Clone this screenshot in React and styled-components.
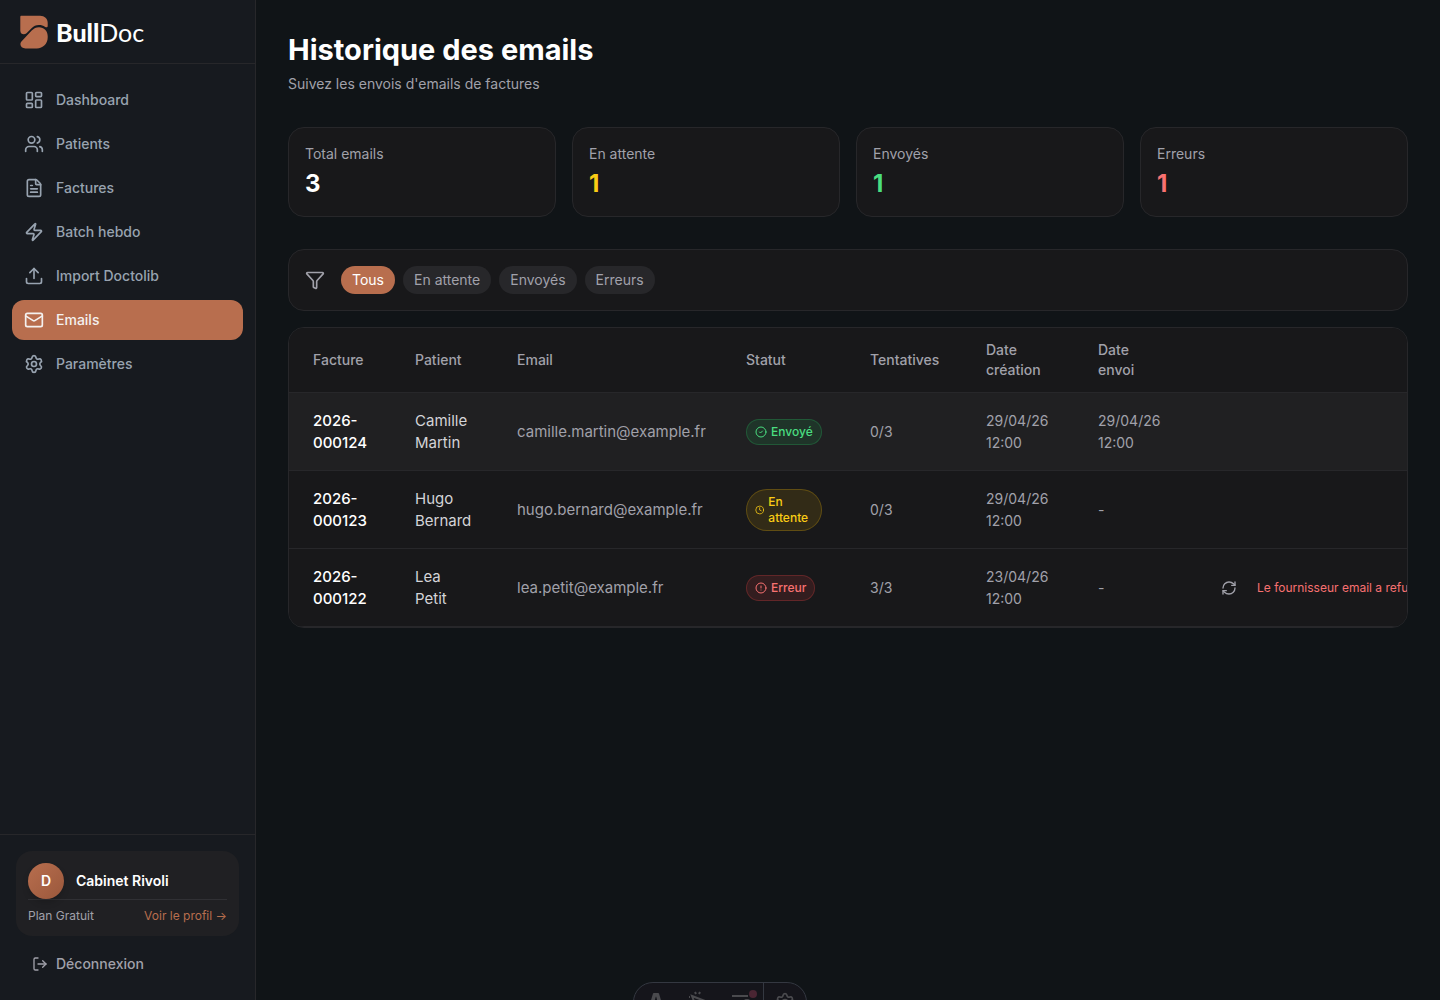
import React from "react";
import styled, { createGlobalStyle, css } from "styled-components";
import {
  LayoutDashboard, Users, FileText, Zap, Upload, Mail, Settings, LogOut,
  Filter, CircleCheck, Clock, CircleAlert, RefreshCw,
} from "lucide-react";

const color = {
  page: "#101417",
  sidebar: "#171a1f",
  card: "#18181a",
  raised: "#202023",
  line: "#27272a",
  accent: "#b86e4e",
  muted: "#a1a1aa",
  nav: "#98a3b0",
};

const GlobalStyle = createGlobalStyle`
  *, *::before, *::after { box-sizing: border-box; }
  body {
    margin: 0;
    background: ${color.page};
    color: #fafafa;
    font-family: Inter, "Liberation Sans", sans-serif;
    font-size: 15px;
    line-height: 22px;
    -webkit-font-smoothing: antialiased;
  }
  h1, p, ul { margin: 0; padding: 0; }
  ul { list-style: none; }
  button { font: inherit; border: 0; cursor: pointer; }
  a { text-decoration: none; }
`;

const Shell = styled.div`
  display: flex;
  min-height: 100vh;
`;

const Sidebar = styled.aside`
  position: sticky;
  top: 0;
  display: flex;
  flex-direction: column;
  flex: 0 0 256px;
  height: 100vh;
  background: ${color.sidebar};
  border-right: 1px solid ${color.line};
`;

const Brand = styled.a`
  display: flex;
  align-items: center;
  gap: 8px;
  height: 64px;
  padding: 0 20px;
  border-bottom: 1px solid ${color.line};
  color: #fff;
  font-family: Lato, "Liberation Sans", sans-serif;
  font-size: 25px;
  line-height: 30px;
  strong { font-weight: 900; }
`;

const Nav = styled.nav`
  flex: 1;
  padding: 16px 12px;
`;

const NavList = styled.ul`
  display: grid;
  gap: 4px;
`;

const NavLink = styled.a`
  display: flex;
  align-items: center;
  gap: 12px;
  height: 40px;
  padding: 0 12px;
  border-radius: 12px;
  font-size: 14px;
  line-height: 20px;
  font-weight: 500;
  color: ${({ $active }) => ($active ? "#f4f1ef" : color.nav)};
  background: ${({ $active }) => ($active ? color.accent : "transparent")};
`;

const SidebarFooter = styled.div`
  display: grid;
  gap: 8px;
  padding: 16px;
  border-top: 1px solid ${color.line};
`;

const ProfileCard = styled.section`
  padding: 12px;
  border-radius: 16px;
  background: ${color.raised};
`;

const ProfileRow = styled.div`
  display: flex;
  align-items: center;
  gap: 12px;
  font-size: 14px;
  line-height: 20px;
  font-weight: 600;
  color: #fff;
`;

const Avatar = styled.span`
  display: grid;
  place-items: center;
  width: 36px;
  height: 36px;
  border-radius: 50%;
  background: linear-gradient(135deg, #b86e4e, #9a583c);
  box-shadow: 0 4px 6px rgba(0, 0, 0, 0.15);
`;

const PlanRow = styled.div`
  display: flex;
  justify-content: space-between;
  padding-top: 8px;
  border-top: 1px solid #303034;
  font-size: 12px;
  line-height: 16px;
  color: ${color.muted};
  a { color: ${color.accent}; }
`;

const LogoutButton = styled.button`
  display: flex;
  align-items: center;
  gap: 8px;
  height: 40px;
  padding: 0 16px;
  background: transparent;
  color: ${color.muted};
  font-size: 14px;
  line-height: 20px;
  font-weight: 500;
`;

const Main = styled.main`
  flex: 1;
  min-width: 0;
  padding: 32px;
`;

const PageHeader = styled.header`
  display: grid;
  gap: 4px;
  margin-bottom: 32px;
  h1 {
    font-size: 29px;
    line-height: 36px;
    font-weight: 700;
    color: #fff;
  }
  p {
    font-size: 14px;
    line-height: 23px;
    color: ${color.muted};
  }
`;

const panel = css`
  background: ${color.card};
  border: 1px solid ${color.line};
  border-radius: 16px;
`;

const Stats = styled.section`
  display: grid;
  grid-template-columns: repeat(4, 1fr);
  gap: 16px;
  margin-bottom: 32px;
`;

const StatCard = styled.div`
  ${panel}
  display: grid;
  gap: 4px;
  padding: 16px;
`;

const StatLabel = styled.p`
  font-size: 14px;
  line-height: 20px;
  color: ${color.muted};
`;

const StatValue = styled.p`
  font-size: 24px;
  line-height: 32px;
  font-weight: 700;
  color: ${({ $color }) => $color};
`;

const FilterBar = styled.section`
  ${panel}
  display: flex;
  align-items: center;
  gap: 16px;
  padding: 16px;
  margin-bottom: 16px;
  color: ${color.muted};
`;

const Chips = styled.div`
  display: flex;
  gap: 8px;
`;

const Chip = styled.button`
  padding: 4px 11px;
  border-radius: 14px;
  font-size: 14px;
  line-height: 20px;
  color: ${({ $active }) => ($active ? "#fff" : color.muted)};
  background: ${({ $active }) => ($active ? color.accent : color.line)};
`;

const TablePanel = styled.section`
  ${panel}
  overflow-x: auto;
  scrollbar-width: none;
`;

const Table = styled.table`
  width: 100%;
  min-width: 1192px;
  table-layout: fixed;
  border-collapse: separate;
  border-spacing: 0;
`;

const Column = styled.col`
  width: ${({ $width }) => $width}px;
`;

const HeadCell = styled.th`
  padding: 12px 24px;
  border-bottom: 1px solid ${color.line};
  font-size: 14px;
  line-height: 20px;
  font-weight: 500;
  text-align: left;
  color: ${color.muted};
`;

const Row = styled.tr`
  background: ${({ $highlighted }) => ($highlighted ? "#202022" : "transparent")};
`;

const Cell = styled.td`
  height: 78px;
  padding: 16px 24px;
  border-bottom: 1px solid ${color.line};
  font-size: ${({ $numeric }) => ($numeric ? 14 : 15)}px;
  font-weight: ${({ $strong }) => ($strong ? 500 : 400)};
  color: ${({ $tone }) => $tone || color.muted};
`;

const badgeTones = {
  sent: ["#4ade80", "34, 197, 94"],
  pending: ["#facc15", "234, 179, 8"],
  error: ["#f87171", "239, 68, 68"],
};

const Badge = styled.span`
  display: flex;
  align-items: center;
  gap: 4px;
  width: fit-content;
  padding: 4px 8px;
  border: 1px solid rgba(${({ $kind }) => badgeTones[$kind][1]}, 0.25);
  border-radius: 21px;
  background: rgba(${({ $kind }) => badgeTones[$kind][1]}, 0.13);
  color: ${({ $kind }) => badgeTones[$kind][0]};
  font-size: 12px;
  line-height: 16px;
  font-weight: 500;
`;

const Actions = styled.div`
  display: flex;
  align-items: center;
  gap: 8px;
`;

const RetryButton = styled.button`
  display: grid;
  place-items: center;
  flex: none;
  width: 40px;
  height: 32px;
  padding: 0;
  background: transparent;
  color: ${color.muted};
`;

const ErrorText = styled.span`
  max-width: 200px;
  overflow: hidden;
  text-overflow: ellipsis;
  white-space: nowrap;
  font-size: 12px;
  line-height: 16px;
  color: #f87171;
`;

const DevBar = styled.div`
  position: fixed;
  left: 50%;
  bottom: -22px;
  display: flex;
  height: 40px;
  transform: translateX(-50%);
  overflow: hidden;
  border: 1px solid #343841;
  border-radius: 20px;
  background: #15151b;
  color: #4a4a4e;
`;

const DevButton = styled.button`
  display: grid;
  place-items: center;
  width: 43px;
  padding: 0;
  border-left: ${({ $divided }) => ($divided ? "1px solid #343841" : "0")};
  background: transparent;
  color: inherit;
  svg { overflow: visible; }
`;

const navItems = [
  [LayoutDashboard, "Dashboard"],
  [Users, "Patients"],
  [FileText, "Factures"],
  [Zap, "Batch hebdo"],
  [Upload, "Import Doctolib"],
  [Mail, "Emails"],
  [Settings, "Paramètres"],
];

const stats = [
  ["Total emails", 3, "#ffffff"],
  ["En attente", 1, "#facc15"],
  ["Envoyés", 1, "#4ade80"],
  ["Erreurs", 1, "#f87171"],
];

const filters = ["Tous", "En attente", "Envoyés", "Erreurs"];

const columns = [
  ["Facture", 102],
  ["Patient", 102],
  ["Email", 229],
  ["Statut", 124],
  ["Tentatives", 116],
  ["Date création", 112],
  ["Date envoi", 111],
  ["", 296],
];

const statuses = {
  sent: [CircleCheck, "Envoyé"],
  pending: [Clock, "En attente"],
  error: [CircleAlert, "Erreur"],
};

const emails = [
  { invoice: "2026-000124", patient: "Camille Martin", email: "camille.martin@example.fr", status: "sent", tries: "0/3", created: "29/04/26 12:00", sent: "29/04/26 12:00" },
  { invoice: "2026-000123", patient: "Hugo Bernard", email: "hugo.bernard@example.fr", status: "pending", tries: "0/3", created: "29/04/26 12:00", sent: "-" },
  { invoice: "2026-000122", patient: "Lea Petit", email: "lea.petit@example.fr", status: "error", tries: "3/3", created: "23/04/26 12:00", sent: "-", error: "Le fournisseur email a refusé le message" },
];

function LogoMark() {
  return (
    <svg width="28" height="34" viewBox="0 0 28 34" fill={color.accent} aria-hidden="true">
      <path d="M1.500.7H20c4.600 0 7.700 3 7.700 7v3c0 1.700-1.200 2-2.500 1.200-2-1.300-3.800-1.800-6.200-1.800-3.200 0-5.200 1-7.200 3L6.500 18.200C4.300 20.300.3 19.500.3 15.500V1.900C.3 1.100.7.7 1.500.7Z" />
      <path d="M19 12.200c5 0 8.700 3.800 8.700 8.700v1.600c0 6.200-4.700 10.900-10.900 10.900H5.500C.8 33.400-1.200 29 1.900 25.900l9.800-10.300c2.200-2.300 4.300-3.400 7.300-3.400Z" />
    </svg>
  );
}

function StatusBadge({ kind }) {
  const [Icon, label] = statuses[kind];
  return (
    <Badge $kind={kind}>
      <Icon size={12} />
      {label}
    </Badge>
  );
}

function DevToolbar() {
  return (
    <DevBar>
      <DevButton aria-label="Menu">
        <svg width="20" height="20" viewBox="0 0 20 20" fill="currentColor">
          <path d="M7.800 1h4.400c.4 0 .7.200.8.600L17 15c-1.400-.7-2.700-1.100-4.200-1.300L10.300 5c-.1-.3-.5-.3-.6 0l-2.500 8.700C5.700 13.900 4.400 14.300 3 15L7 1.600c.1-.4.400-.6.800-.6Z" />
        </svg>
      </DevButton>
      <DevButton aria-label="Inspect">
        <svg width="20" height="20" viewBox="0 0 20 20" fill="none" stroke="currentColor" strokeWidth="2">
          <path d="m3 4 13 5-6 2-2 6L3 4ZM6 0l1 2M11 0l-1 2M0 5h1" />
        </svg>
      </DevButton>
      <DevButton aria-label="Audit">
        <svg width="24" height="20" viewBox="0 0 24 20" fill="none" stroke="currentColor" strokeWidth="2">
          <path d="M2 4h16M2 9h9M2 14h6" />
          <circle cx="17" cy="12" r="4" />
          <circle cx="23" cy="2" r="4" fill="#4a2533" stroke="none" />
        </svg>
      </DevButton>
      <DevButton $divided aria-label="Settings">
        <Settings size={20} />
      </DevButton>
    </DevBar>
  );
}

export default function App() {
  return (
    <>
      <GlobalStyle />
      <Shell>
        <Sidebar>
          <Brand href="#">
            <LogoMark />
            <span><strong>Bull</strong>Doc</span>
          </Brand>
          <Nav>
            <NavList>
              {navItems.map(([Icon, label]) => (
                <li key={label}>
                  <NavLink href="#" $active={label === "Emails"}>
                    <Icon size={20} />
                    {label}
                  </NavLink>
                </li>
              ))}
            </NavList>
          </Nav>
          <SidebarFooter>
            <ProfileCard>
              <ProfileRow>
                <Avatar>D</Avatar>
                Cabinet Rivoli
              </ProfileRow>
              <PlanRow>
                <span>Plan Gratuit</span>
                <a href="#">Voir le profil →</a>
              </PlanRow>
            </ProfileCard>
            <LogoutButton>
              <LogOut size={16} />
              Déconnexion
            </LogoutButton>
          </SidebarFooter>
        </Sidebar>
        <Main>
          <PageHeader>
            <h1>Historique des emails</h1>
            <p>Suivez les envois d'emails de factures</p>
          </PageHeader>
          <Stats>
            {stats.map(([label, value, tone]) => (
              <StatCard key={label}>
                <StatLabel>{label}</StatLabel>
                <StatValue $color={tone}>{value}</StatValue>
              </StatCard>
            ))}
          </Stats>
          <FilterBar>
            <Filter size={20} />
            <Chips>
              {filters.map((label) => (
                <Chip key={label} $active={label === "Tous"}>{label}</Chip>
              ))}
            </Chips>
          </FilterBar>
          <TablePanel>
            <Table>
              <colgroup>
                {columns.map(([label, width]) => (
                  <Column key={label} $width={width} />
                ))}
              </colgroup>
              <thead>
                <tr>
                  {columns.map(([label]) => (
                    <HeadCell key={label} scope="col">{label}</HeadCell>
                  ))}
                </tr>
              </thead>
              <tbody>
                {emails.map((row, index) => (
                  <Row key={row.invoice} $highlighted={index === 0}>
                    <Cell $strong $tone="#ffffff">{row.invoice}</Cell>
                    <Cell $tone="#d4d4d8">{row.patient}</Cell>
                    <Cell>{row.email}</Cell>
                    <Cell><StatusBadge kind={row.status} /></Cell>
                    <Cell $numeric>{row.tries}</Cell>
                    <Cell $numeric>{row.created}</Cell>
                    <Cell $numeric>{row.sent}</Cell>
                    <Cell>
                      {row.error && (
                        <Actions>
                          <RetryButton aria-label="Renvoyer"><RefreshCw size={16} /></RetryButton>
                          <ErrorText>{row.error}</ErrorText>
                        </Actions>
                      )}
                    </Cell>
                  </Row>
                ))}
              </tbody>
            </Table>
          </TablePanel>
        </Main>
      </Shell>
      <DevToolbar />
    </>
  );
}
